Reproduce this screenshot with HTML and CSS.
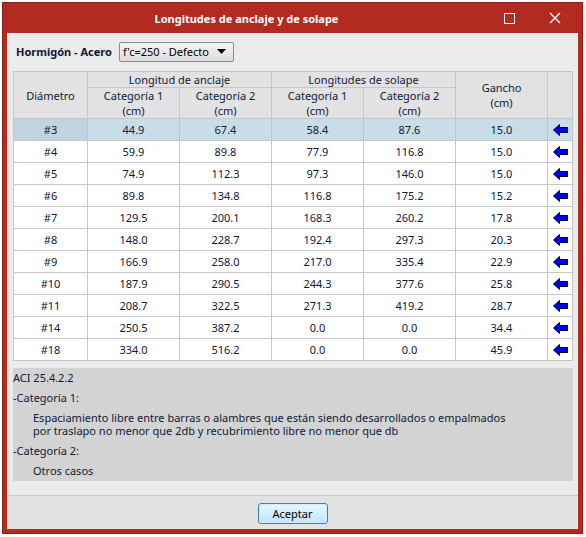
FILE: index.html
```html
<!DOCTYPE html>
<html lang="es">
<head>
    <meta charset="UTF-8">
    <title>Longitudes de anclaje y de solape</title>
    <link rel="stylesheet" href="styles.css">
</head>
<body>
    <div class="window">
        <div class="titlebar">
            <span class="title">Longitudes de anclaje y de solape</span>
            <span class="win-btn max"></span>
            <span class="win-btn close">
                <svg width="12" height="12" viewBox="0 0 12 12"><path d="M1 1L11 11M11 1L1 11" stroke="#fff" stroke-width="1.4"/></svg>
            </span>
        </div>
        <div class="content">
            <div class="toolbar">
                <label>Hormigón - Acero</label>
                <div class="select">
                    <span>f'c=250 - Defecto</span>
                    <svg width="9" height="5" viewBox="0 0 9 5"><path d="M0 0H9L4.5 5Z" fill="#000"/></svg>
                </div>
            </div>

            <table class="grid">
                <thead>
                    <tr>
                        <th rowspan="2" class="c-dia">Diámetro</th>
                        <th colspan="2" class="group">Longitud de anclaje</th>
                        <th colspan="2" class="group">Longitudes de solape</th>
                        <th rowspan="2" class="c-num">Gancho<br>(cm)</th>
                        <th rowspan="2" class="c-arrow"></th>
                    </tr>
                    <tr>
                        <th class="c-num">Categoría 1<br>(cm)</th>
                        <th class="c-num">Categoría 2<br>(cm)</th>
                        <th class="c-num">Categoría 1<br>(cm)</th>
                        <th class="c-num">Categoría 2<br>(cm)</th>
                    </tr>
                </thead>
                <tbody id="rows"></tbody>
            </table>

            <div class="notes">
                <p>ACI 25.4.2.2</p>
                <p class="gap">-Categoría 1:</p>
                <p class="gap indent">Espaciamiento libre entre barras o alambres que están siendo desarrollados o empalmados<br>por traslapo no menor que 2db y recubrimiento libre no menor que db</p>
                <p class="gap">-Categoría 2:</p>
                <p class="gap indent">Otros casos</p>
            </div>

            <div class="footer">
                <button>Aceptar</button>
            </div>
        </div>
    </div>

    <script>
        const data = [
            ['#3', '44.9', '67.4', '58.4', '87.6', '15.0'],
            ['#4', '59.9', '89.8', '77.9', '116.8', '15.0'],
            ['#5', '74.9', '112.3', '97.3', '146.0', '15.0'],
            ['#6', '89.8', '134.8', '116.8', '175.2', '15.2'],
            ['#7', '129.5', '200.1', '168.3', '260.2', '17.8'],
            ['#8', '148.0', '228.7', '192.4', '297.3', '20.3'],
            ['#9', '166.9', '258.0', '217.0', '335.4', '22.9'],
            ['#10', '187.9', '290.5', '244.3', '377.6', '25.8'],
            ['#11', '208.7', '322.5', '271.3', '419.2', '28.7'],
            ['#14', '250.5', '387.2', '0.0', '0.0', '34.4'],
            ['#18', '334.0', '516.2', '0.0', '0.0', '45.9']
        ];

        const arrow = '<svg width="15" height="12" viewBox="0 0 15 12"><path d="M0.5 6L6.5 0.5V3.5H14.5V8.5H6.5V11.5Z" fill="#0000ff" stroke="#000020" stroke-width="1"/></svg>';

        const tbody = document.getElementById('rows');
        data.forEach((row, i) => {
            const tr = document.createElement('tr');
            if (i === 0) tr.className = 'selected';
            tr.innerHTML = row.map(v => `<td>${v}</td>`).join('') + `<td class="arrow">${arrow}</td>`;
            tbody.appendChild(tr);
        });
    </script>
</body>
</html>
```

FILE: styles.css
```css
body {
    margin: 0;
    background: #ffffff;
    font-family: "Noto Sans", "DejaVu Sans", sans-serif;
    font-size: 11px;
    color: #101838;
}
.window {
    margin: 2px;
    width: 581px;
    height: 532px;
    box-sizing: border-box;
    background: #b22a20;
    border: 1px solid #8e1f17;
    padding: 0 4px 4px;
    display: flex;
    flex-direction: column;
}
.titlebar {
    height: 30px;
    flex: none;
    display: flex;
    align-items: center;
    color: #ffffff;
}
.title {
    flex: 1;
    text-align: center;
    font-weight: bold;
    font-size: 11px;
}
.win-btn {
    width: 46px;
    height: 30px;
    display: flex;
    align-items: center;
    justify-content: center;
}
.win-btn.max::before {
    content: "";
    width: 9px;
    height: 9px;
    border: 1px solid #ffffff;
}
.content {
    flex: 1;
    min-height: 0;
    background: #ebebeb;
    display: flex;
    flex-direction: column;
}
.toolbar {
    display: flex;
    align-items: center;
    padding: 8px 0 0 9px;
    height: 21px;
    flex: none;
}
.toolbar label {
    font-weight: bold;
    margin-right: 7px;
}
.select {
    width: 115px;
    height: 20px;
    box-sizing: border-box;
    border: 1px solid #8a8a8a;
    border-radius: 2px;
    background: linear-gradient(#f4f4f4, #dedede);
    display: flex;
    align-items: center;
    justify-content: space-between;
    padding: 0 7px 0 3px;
    color: #000000;
}
.grid {
    margin: 9px 0 0 6px;
    width: 560px;
    border-collapse: collapse;
    table-layout: fixed;
    background: #ffffff;
    flex: none;
}
.grid th, .grid td {
    border: 1px solid #c6c6c6;
    text-align: center;
    padding: 0;
    white-space: nowrap;
    line-height: 15px;
}
.grid th {
    background: #e2e2e2;
    font-weight: normal;
}
.grid th.group {
    height: 15px;
}
.grid thead tr:nth-child(2) th {
    height: 30px;
}
.c-dia { width: 73px; }
.c-num { width: 91px; }
.c-arrow { width: 24px; }
.grid td {
    height: 21px;
}
.grid td.arrow svg {
    display: block;
    margin: 1px auto 0;
}
.grid tr.selected td {
    background: #c9dde9;
}
.grid tr.selected td:first-child {
    background: #c0d3de;
}
.notes {
    margin: 7px 0 0 6px;
    width: 560px;
    height: 113px;
    box-sizing: border-box;
    background: #d3d3d3;
    padding-top: 3px;
    flex: none;
}
.notes p {
    margin: 0;
    line-height: 13px;
}
.notes p.gap {
    margin-top: 7px;
}
.notes p.indent {
    padding-left: 20px;
}
.footer {
    flex: 1;
    margin-top: 14px;
    border-top: 1px solid #c8c8c8;
    background: #e2e2e2;
    display: flex;
    justify-content: center;
    align-items: flex-start;
    padding-top: 7px;
}
.footer button {
    width: 70px;
    height: 21px;
    font-family: inherit;
    font-size: 11px;
    color: #000000;
    border: 1px solid #3c7fb1;
    border-radius: 3px;
    background: linear-gradient(#eaf6fd, #bee6fd);
    box-shadow: inset 0 0 0 1px #cdeeff;
    padding: 0;
}
```
